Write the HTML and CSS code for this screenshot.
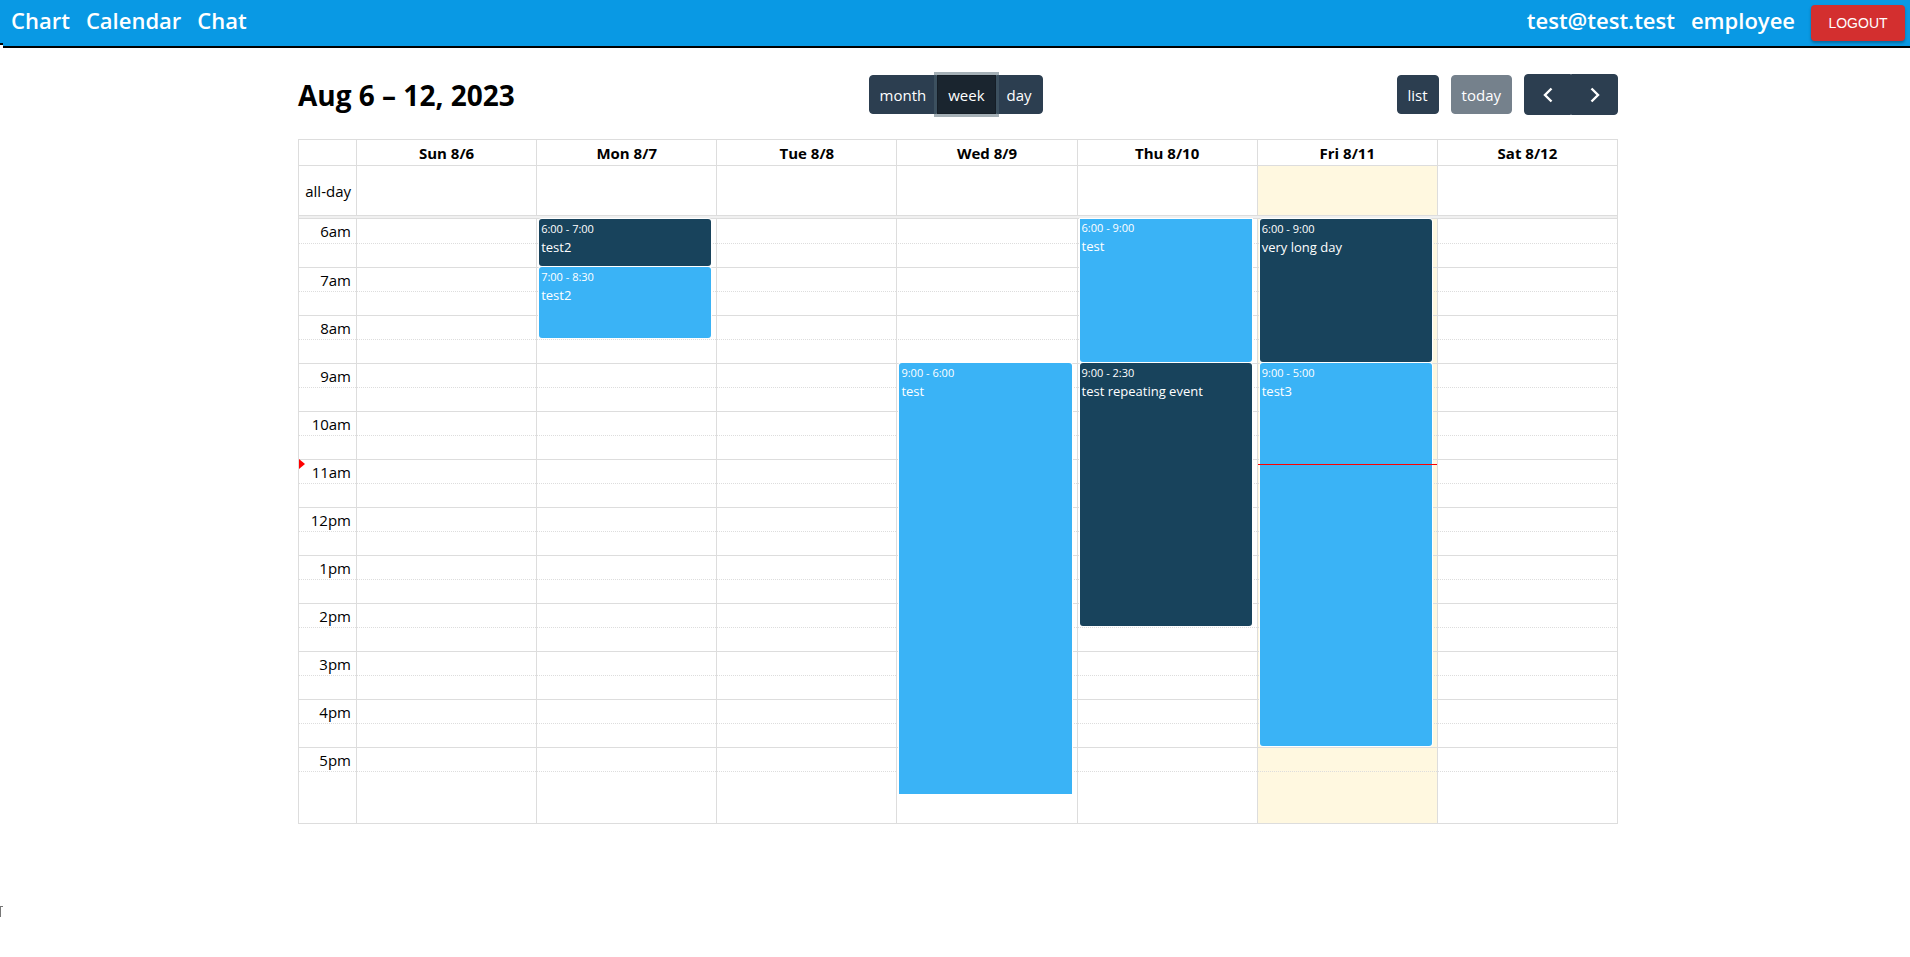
FILE: index.html
```html
<!DOCTYPE html>
<html lang="en">
<head>
<meta charset="utf-8">
<title>Calendar</title>
<link rel="stylesheet" href="styles.css">
</head>
<body>
<header class="navbar">
  <nav class="nav-links">
    <a href="#chart">Chart</a>
    <a href="#calendar">Calendar</a>
    <a href="#chat">Chat</a>
  </nav>
  <div class="nav-user">
    <span>test@test.test</span>
    <span>employee</span>
    <button type="button" class="logout">LOGOUT</button>
  </div>
</header>
<div class="page-edge"></div>
<main class="calendar">
  <div class="toolbar">
    <h2 class="toolbar-title">Aug 6 – 12, 2023</h2>
    <div class="btn-group">
      <button type="button" class="btn">month</button>
      <button type="button" class="btn active">week</button>
      <button type="button" class="btn">day</button>
    </div>
    <div class="toolbar-end">
      <button type="button" class="btn">list</button>
      <button type="button" class="btn" disabled>today</button>
      <div class="btn-group">
        <button type="button" class="btn btn-icon" aria-label="Previous week"><svg width="10" height="16" viewBox="0 0 10 16"><path d="M8.500 1.500 2 8 8.500 14.500"/></svg></button>
        <button type="button" class="btn btn-icon" aria-label="Next week"><svg width="10" height="16" viewBox="0 0 10 16"><path d="M1.500 1.500 8 8 1.500 14.500"/></svg></button>
      </div>
    </div>
  </div>
  <table class="week">
    <colgroup><col class="axis-col"><col span="7"></colgroup>
    <thead>
      <tr><td></td><th>Sun 8/6</th><th>Mon 8/7</th><th>Tue 8/8</th><th>Wed 8/9</th><th>Thu 8/10</th><th>Fri 8/11</th><th>Sat 8/12</th></tr>
    </thead>
    <tbody>
      <tr class="all-day"><td class="axis">all-day</td><td></td><td></td><td></td><td></td><td></td><td class="today"></td><td></td></tr>
      <tr class="divider"><td colspan="8"></td></tr>
      <tr class="first">
        <td class="axis"><span>6am</span><i class="now-arrow" style="--at: 5.100"></i></td>
        <td></td>
        <td>
          <div class="event dark" style="--start: 0; --len: 1"><time>6:00 - 7:00</time><span>test2</span></div>
          <div class="event" style="--start: 1; --len: 1.5"><time>7:00 - 8:30</time><span>test2</span></div>
        </td>
        <td></td>
        <td><div class="event continues" style="--start: 3; --len: 9"><time>9:00 - 6:00</time><span>test</span></div></td>
        <td>
          <div class="event continued" style="--start: 0; --len: 3"><time>6:00 - 9:00</time><span>test</span></div>
          <div class="event dark" style="--start: 3; --len: 5.5"><time>9:00 - 2:30</time><span>test repeating event</span></div>
        </td>
        <td class="today">
          <div class="event dark" style="--start: 0; --len: 3"><time>6:00 - 9:00</time><span>very long day</span></div>
          <div class="event" style="--start: 3; --len: 8"><time>9:00 - 5:00</time><span>test3</span></div>
          <div class="now-line" style="--at: 5.100"></div>
        </td>
        <td></td>
      </tr>
      <tr class="half"><td></td><td></td><td></td><td></td><td></td><td></td><td class="today"></td><td></td></tr>
      <tr><td class="axis"><span>7am</span></td><td></td><td></td><td></td><td></td><td></td><td class="today"></td><td></td></tr>
      <tr class="half"><td></td><td></td><td></td><td></td><td></td><td></td><td class="today"></td><td></td></tr>
      <tr><td class="axis"><span>8am</span></td><td></td><td></td><td></td><td></td><td></td><td class="today"></td><td></td></tr>
      <tr class="half"><td></td><td></td><td></td><td></td><td></td><td></td><td class="today"></td><td></td></tr>
      <tr><td class="axis"><span>9am</span></td><td></td><td></td><td></td><td></td><td></td><td class="today"></td><td></td></tr>
      <tr class="half"><td></td><td></td><td></td><td></td><td></td><td></td><td class="today"></td><td></td></tr>
      <tr><td class="axis"><span>10am</span></td><td></td><td></td><td></td><td></td><td></td><td class="today"></td><td></td></tr>
      <tr class="half"><td></td><td></td><td></td><td></td><td></td><td></td><td class="today"></td><td></td></tr>
      <tr><td class="axis"><span>11am</span></td><td></td><td></td><td></td><td></td><td></td><td class="today"></td><td></td></tr>
      <tr class="half"><td></td><td></td><td></td><td></td><td></td><td></td><td class="today"></td><td></td></tr>
      <tr><td class="axis"><span>12pm</span></td><td></td><td></td><td></td><td></td><td></td><td class="today"></td><td></td></tr>
      <tr class="half"><td></td><td></td><td></td><td></td><td></td><td></td><td class="today"></td><td></td></tr>
      <tr><td class="axis"><span>1pm</span></td><td></td><td></td><td></td><td></td><td></td><td class="today"></td><td></td></tr>
      <tr class="half"><td></td><td></td><td></td><td></td><td></td><td></td><td class="today"></td><td></td></tr>
      <tr><td class="axis"><span>2pm</span></td><td></td><td></td><td></td><td></td><td></td><td class="today"></td><td></td></tr>
      <tr class="half"><td></td><td></td><td></td><td></td><td></td><td></td><td class="today"></td><td></td></tr>
      <tr><td class="axis"><span>3pm</span></td><td></td><td></td><td></td><td></td><td></td><td class="today"></td><td></td></tr>
      <tr class="half"><td></td><td></td><td></td><td></td><td></td><td></td><td class="today"></td><td></td></tr>
      <tr><td class="axis"><span>4pm</span></td><td></td><td></td><td></td><td></td><td></td><td class="today"></td><td></td></tr>
      <tr class="half"><td></td><td></td><td></td><td></td><td></td><td></td><td class="today"></td><td></td></tr>
      <tr><td class="axis"><span>5pm</span></td><td></td><td></td><td></td><td></td><td></td><td class="today"></td><td></td></tr>
      <tr class="half"><td></td><td></td><td></td><td></td><td></td><td></td><td class="today"></td><td></td></tr>
      <tr class="filler"><td></td><td></td><td></td><td></td><td></td><td></td><td class="today"></td><td></td></tr>
    </tbody>
  </table>
</main>
<div class="edge-mark"></div>
</body>
</html>
```

FILE: styles.css
```css
* { box-sizing: border-box; }

body {
  margin: 0;
  background: #fff;
  color: #000;
  font-family: "Open Sans", "Noto Sans", sans-serif;
  font-size: 15px;
  line-height: 20px;
}

button { font-family: inherit; cursor: pointer; }

.navbar {
  display: flex;
  justify-content: space-between;
  align-items: flex-start;
  height: 48px;
  padding: 5px 5px 0 11px;
  background: #0999e4;
  border-bottom: 2px solid #000;
  color: #fff;
  font-size: 22px;
  font-weight: 600;
  line-height: 30px;
}

.nav-links, .nav-user { display: flex; gap: 16px; }
.nav-links a { color: inherit; text-decoration: none; }

.logout {
  width: 94px;
  height: 36px;
  border: 0;
  border-radius: 4px;
  background: #d32f2f;
  box-shadow: 0 2px 3px rgba(0, 0, 0, 0.3);
  color: #fff;
  font-family: "Liberation Sans", Arial, sans-serif;
  font-size: 14px;
}

.page-edge {
  position: absolute;
  top: 43px;
  left: 0;
  width: 3px;
  height: 5px;
  border-top: 2px solid #000;
  background: #fff;
}

.edge-mark {
  position: absolute;
  top: 906px;
  left: 0;
  width: 3px;
  height: 11px;
  border-top: 1px solid #777;
  border-left: 1px solid #777;
}

.calendar {
  width: calc(100% - 590px);
  min-width: 800px;
  margin: 26px 292px 0 298px;
}

.toolbar {
  display: flex;
  justify-content: space-between;
  align-items: center;
  margin-bottom: 24px;
}

.toolbar-title {
  margin: 0;
  font-size: 28px;
  line-height: 40px;
}

.toolbar-end { display: flex; align-items: center; gap: 12px; }

.btn-group { display: flex; }
.btn-group .btn:not(:first-child) { border-top-left-radius: 0; border-bottom-left-radius: 0; }
.btn-group .btn:not(:last-child) { border-top-right-radius: 0; border-bottom-right-radius: 0; }

.btn {
  height: 39px;
  padding: 0 10px;
  border: 1px solid #2c3e50;
  border-radius: 4px;
  background: #2c3e50;
  color: #fff;
  font-size: 15px;
}

.btn:disabled { opacity: 0.65; }

.btn.active {
  position: relative;
  z-index: 1;
  border-color: #151e27;
  background: #1a252f;
  box-shadow: 0 0 0 3px rgba(76, 98, 110, 0.5);
}

.btn-icon {
  display: flex;
  justify-content: center;
  align-items: center;
  width: 47px;
  height: 41px;
}

.btn-icon svg { fill: none; stroke: #fff; stroke-width: 2.4; }

.week {
  width: 100%;
  table-layout: fixed;
  border: 0 solid #ddd;
  border-width: 0 1px 1px 0;
  border-spacing: 0;
}

.axis-col { width: 58px; }

.week th, .week td {
  height: 24px;
  padding: 0;
  border: 0 solid #ddd;
  border-width: 1px 0 0 1px;
}

.week thead td, .week th { height: 26px; }
.week .all-day td { height: 50px; }
.week .divider td { height: 3px; background: #f0f0f0; }
.week .first td { position: relative; height: 25px; }
.week .half td { border-top-style: dotted; }
.week .filler td { height: 28px; border-top: 0; }
.week .today { background: #fff8e0; }

.week .axis { padding-right: 5px; text-align: right; }
.axis span { display: block; height: 22px; line-height: 22px; }

.event {
  --hour: 48px;
  position: absolute;
  top: calc(var(--start) * var(--hour));
  left: 2px;
  right: 5px;
  height: calc(var(--len) * var(--hour) - 1px);
  padding: 2px 2px 0;
  border-radius: 3px;
  background: #3ab3f6;
  box-shadow: 0 0 0 1px #fff;
  color: #fff;
  font-size: 13px;
  line-height: 20px;
}

.event time { display: block; font-size: 11px; line-height: 16px; }
.event span { display: block; }
.event.dark { background: #18435c; }
.event.continued { padding-top: 1px; border-top-left-radius: 0; border-top-right-radius: 0; }
.event.continues { border-bottom-left-radius: 0; border-bottom-right-radius: 0; }

.now-line {
  position: absolute;
  top: calc(var(--at) * 48px);
  left: 0;
  right: 0;
  height: 1px;
  background: #f00;
}

.now-arrow {
  position: absolute;
  top: calc(var(--at) * 48px - 5px);
  left: 0;
  border: solid transparent;
  border-width: 5px 0 5px 6px;
  border-left-color: #f00;
}
```
